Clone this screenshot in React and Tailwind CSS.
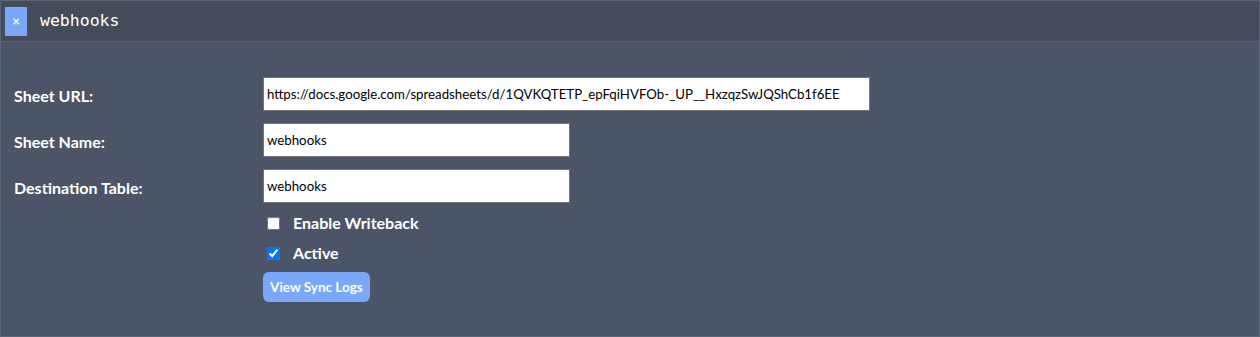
import React from "react";

export default function App() {
  const lato = { fontFamily: "Lato, 'Open Sans', sans-serif" };
  return (
    <div className="w-[1260px] h-[337px] bg-[#4b5567] border border-[#5b6478] flex flex-col" style={lato}>
      <div className="h-[41px] bg-[#444b5a] border-b border-[#5b6478] flex items-center pl-1 shrink-0">
        <button className="w-[22px] h-[29px] bg-[#79a8fb] text-white text-[13px] font-bold flex items-center justify-center leading-none">×</button>
        <span className="ml-[13px] text-white text-[16.5px]" style={{ fontFamily: "'DejaVu Sans Mono', monospace" }}>webhooks</span>
      </div>
      <div className="pt-[35px] pl-[13px] flex flex-col">
        <div className="flex items-center h-[34px]">
          <label className="w-[249px] mt-[3px] text-white font-bold text-[16px]">Sheet URL:</label>
          <input readOnly value="https://docs.google.com/spreadsheets/d/1QVKQTETP_epFqiHVFOb-_UP__HxzqzSwJQShCb1f6EE" className="w-[607px] h-[34px] bg-white border border-[#767676] px-[3px] text-[13.25px] text-black outline-none" />
        </div>
        <div className="flex items-center h-[34px] mt-[12px]">
          <label className="w-[249px] mt-[3px] text-white font-bold text-[16px]">Sheet Name:</label>
          <input readOnly value="webhooks" className="w-[307px] h-[34px] bg-white border border-[#767676] px-[3px] text-[13.25px] text-black outline-none" />
        </div>
        <div className="flex items-center h-[34px] mt-[12px]">
          <label className="w-[249px] mt-[3px] text-white font-bold text-[16px]">Destination Table:</label>
          <input readOnly value="webhooks" className="w-[307px] h-[34px] bg-white border border-[#767676] px-[3px] text-[13.25px] text-black outline-none" />
        </div>
        <div className="pl-[249px] flex flex-col">
          <label className="flex items-center h-[30px] mt-[5px]">
            <input type="checkbox" className="w-[13px] h-[13px] ml-[4px] mr-[13px]" />
            <span className="text-white font-bold text-[16px]">Enable Writeback</span>
          </label>
          <label className="flex items-center h-[30px]">
            <input type="checkbox" defaultChecked className="w-[13px] h-[13px] ml-[4px] mr-[13px]" />
            <span className="text-white font-bold text-[16px]">Active</span>
          </label>
          <div className="mt-[4px]">
            <button className="h-[30px] px-[7px] rounded-[6px] bg-[#79a8fb] text-white font-bold text-[13.5px]">View Sync Logs</button>
          </div>
        </div>
      </div>
    </div>
  );
}
